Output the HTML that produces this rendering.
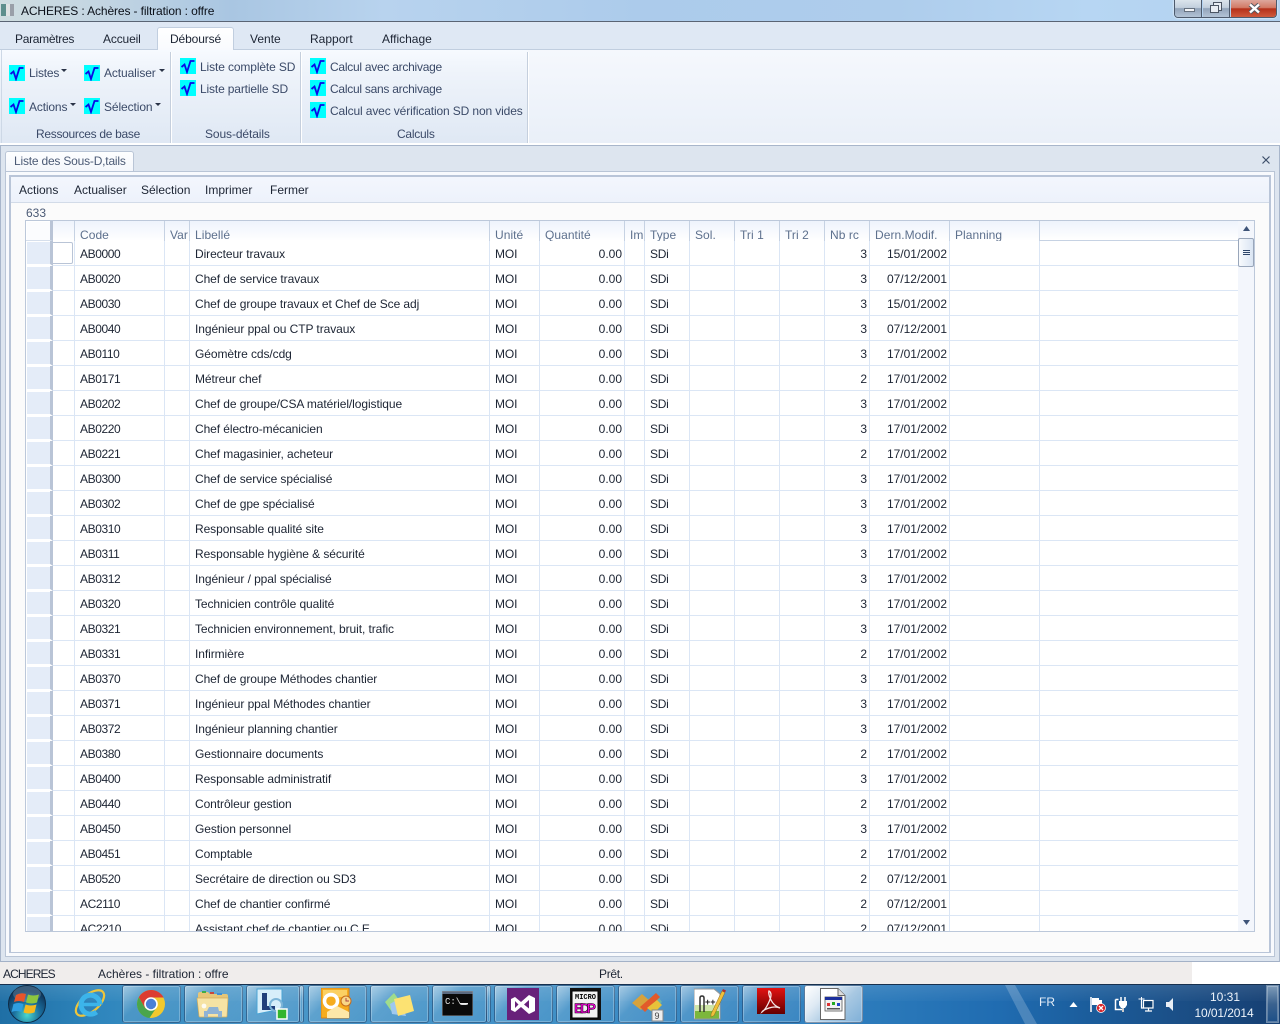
<!DOCTYPE html>
<html lang="fr"><head><meta charset="utf-8"><title>ACHERES</title>
<style>
*{box-sizing:border-box}
html,body{margin:0;padding:0;width:1280px;height:1024px;overflow:hidden;background:#fff}
body{font:12px "Liberation Sans",sans-serif;position:relative;color:#1c2433}
.a,.t{position:absolute;white-space:nowrap}
.t{line-height:14px;letter-spacing:0}
.rb{color:#3b4a68}
.ic{position:absolute;width:16px;height:16px;background:#00ffff}
.ic svg{display:block}
#grid{position:absolute;left:25px;top:220px;width:1230px;height:712px;border:1px solid #bcc8da;overflow:hidden;background:#fff}
#grid table{position:absolute;left:0;top:0;width:1213px;table-layout:fixed;border-collapse:separate;border-spacing:0}
#grid th,#grid td{padding:0 2px 0 5px;overflow:hidden;white-space:nowrap;font-weight:normal;text-align:left;border-right:1px solid #dbe6f5;letter-spacing:-.08px}
#grid th{height:20px;vertical-align:bottom;padding-bottom:0;line-height:12px;color:#5d708d;border-right-color:#c6d2e3;background:linear-gradient(#eef3fc,#fff);letter-spacing:.05px}
#grid td{height:25px;border-bottom:1px solid #dbe6f5;color:#1c2433;padding-top:2px;line-height:22px;vertical-align:top}
#grid td:nth-child(3){letter-spacing:-.4px}
#grid td:nth-child(6){letter-spacing:-.1px}
#grid td:nth-child(9){letter-spacing:-.3px}
#grid .h{padding:0;background:#e4ecf8;border-right:3px solid #b9c4d6;border-bottom:2px solid #fff;box-shadow:inset 1px 1px 0 #fff}
#grid th.h{background:#fbfcfe;border-bottom:1px solid #d6dfec}
#grid td.s{padding:0}
#grid .r{text-align:right;letter-spacing:0}
#grid td.e,#grid th.e{border-right:0}
.btn{position:absolute;top:985px;height:38px;border:1px solid rgba(20,50,90,.5);border-radius:3px;box-shadow:inset 0 0 0 1px rgba(255,255,255,.25);background:linear-gradient(135deg,rgba(255,255,255,.5) 0,rgba(255,255,255,.12) 35%,rgba(255,255,255,.05) 100%)}
</style></head><body>

<!-- title bar -->
<div class="a" style="left:0;top:0;width:1280px;height:22px;background:linear-gradient(90deg,#cfdde0 0,#c3d5e2 8%,#a9c6e2 18%,#b8d3ee 30%,#accbeb 50%,#aecdec 70%,#b7d6f3 85%,#b2d1ef 100%);border-bottom:1px solid #5a6474"></div>
<div class="a" style="left:1px;top:4px;width:13px;height:12px;background:linear-gradient(90deg,#5d8f8c 0 5px,#dfe3e3 5px 9px,#9aa0a8 9px)"></div>
<div class="t" style="left:21px;top:4px;color:#0a0f18;letter-spacing:-.12px">ACHERES : Achères - filtration : offre</div>
<div class="a" style="left:1174px;top:0;width:103px;height:18px;border:1px solid #4d5a6c;border-top:0;border-radius:0 0 4px 4px;overflow:hidden;box-shadow:0 0 2px #fff">
 <div class="a" style="left:0;top:0;width:27px;height:17px;background:linear-gradient(#dbe4ec 0,#c2cfdd 45%,#92a4ba 50%,#b3c3d6 100%);border-right:1px solid #4d5a6c"></div>
 <div class="a" style="left:9px;top:8px;width:11px;height:4px;background:#f2f4f7;border:1px solid #66717f"></div>
 <div class="a" style="left:28px;top:0;width:27px;height:17px;background:linear-gradient(#dbe4ec 0,#c2cfdd 45%,#92a4ba 50%,#b3c3d6 100%);border-right:1px solid #4d5a6c"></div>
 <div class="a" style="left:38px;top:2px;width:9px;height:9px;border:1px solid #4b5563;background:#e8edf3"></div>
 <div class="a" style="left:35px;top:5px;width:9px;height:8px;border:1px solid #4b5563;background:#e8edf3"></div>
 <div class="a" style="left:56px;top:0;width:47px;height:17px;background:linear-gradient(#dda79c 0,#d27a66 45%,#b5301a 52%,#cf5a3c 100%)"></div>
 <svg class="a" style="left:73px;top:3px" width="13" height="11"><path d="M2 1.5L11 9.5M11 1.5L2 9.5" stroke="#565b63" stroke-width="4.4"/><path d="M2 1.5L11 9.5M11 1.5L2 9.5" stroke="#fff" stroke-width="2.4"/></svg>
</div>

<!-- ribbon -->
<div class="a" style="left:0;top:22px;width:1280px;height:28px;background:#dfe8f4"></div>
<div class="a" style="left:0;top:49px;width:1280px;height:1px;background:#c1cedf"></div>
<div class="a" style="left:157px;top:27px;width:77px;height:24px;background:linear-gradient(#fff,#f8fafe);border:1px solid #c1cedf;border-bottom:0;border-radius:3px 3px 0 0"></div>
<div class="t" style="left:15px;top:32px;letter-spacing:-.3px">Paramètres</div>
<div class="t" style="left:103px;top:32px;letter-spacing:-.15px">Accueil</div>
<div class="t" style="left:170px;top:32px;letter-spacing:-.12px">Déboursé</div>
<div class="t" style="left:250px;top:32px">Vente</div>
<div class="t" style="left:310px;top:32px">Rapport</div>
<div class="t" style="left:382px;top:32px">Affichage</div>

<div class="a" style="left:0;top:50px;width:1280px;height:94px;background:linear-gradient(#f7faff 0,#eef3fa 25%,#dfe8f4 100%)"></div>
<div class="a" style="left:528px;top:50px;width:752px;height:94px;background:linear-gradient(#f5f8fd,#e9eff8)"></div>
<div class="a" style="left:1px;top:50px;width:1px;height:93px;background:#cdd8e6"></div>
<div class="a" style="left:170px;top:52px;width:2px;height:91px;background:#c5cfdd;border-right:1px solid #fff"></div>
<div class="a" style="left:300px;top:52px;width:2px;height:91px;background:#c5cfdd;border-right:1px solid #fff"></div>
<div class="a" style="left:527px;top:52px;width:2px;height:91px;background:#c5cfdd;border-right:1px solid #fff"></div>
<div class="a" style="left:0;top:143px;width:1280px;height:3px;background:#fff;border-bottom:1px solid #a8b6cb"></div>

<div class="ic" style="left:9px;top:65px"><svg width="16" height="16"><path d="M1.5 9L4.5 6.5L7 14L10.5 3H14.5" fill="none" stroke="#0a0ae6" stroke-width="1.8"/></svg></div>
<div class="t rb" style="left:29px;top:66px;letter-spacing:-.2px">Listes</div>
<svg class="a" style="left:61px;top:69px" width="7" height="4"><path d="M0 0H6L3 3Z" fill="#2a3347"/></svg>
<div class="ic" style="left:84px;top:65px"><svg width="16" height="16"><path d="M1.5 9L4.5 6.5L7 14L10.5 3H14.5" fill="none" stroke="#0a0ae6" stroke-width="1.8"/></svg></div>
<div class="t rb" style="left:104px;top:66px;letter-spacing:-.1px">Actualiser</div>
<svg class="a" style="left:159px;top:69px" width="7" height="4"><path d="M0 0H6L3 3Z" fill="#2a3347"/></svg>
<div class="ic" style="left:9px;top:98px"><svg width="16" height="16"><path d="M1.5 9L4.5 6.5L7 14L10.5 3H14.5" fill="none" stroke="#0a0ae6" stroke-width="1.8"/></svg></div>
<div class="t rb" style="left:29px;top:100px;letter-spacing:-.15px">Actions</div>
<svg class="a" style="left:70px;top:103px" width="7" height="4"><path d="M0 0H6L3 3Z" fill="#2a3347"/></svg>
<div class="ic" style="left:84px;top:98px"><svg width="16" height="16"><path d="M1.5 9L4.5 6.5L7 14L10.5 3H14.5" fill="none" stroke="#0a0ae6" stroke-width="1.8"/></svg></div>
<div class="t rb" style="left:104px;top:100px;letter-spacing:-.1px">Sélection</div>
<svg class="a" style="left:155px;top:103px" width="7" height="4"><path d="M0 0H6L3 3Z" fill="#2a3347"/></svg>
<div class="t rb" style="left:36px;top:127px;letter-spacing:-.3px">Ressources de base</div>

<div class="ic" style="left:180px;top:58px"><svg width="16" height="16"><path d="M1.5 9L4.5 6.5L7 14L10.5 3H14.5" fill="none" stroke="#0a0ae6" stroke-width="1.8"/></svg></div>
<div class="t rb" style="left:200px;top:60px;letter-spacing:-.12px">Liste complète SD</div>
<div class="ic" style="left:180px;top:80px"><svg width="16" height="16"><path d="M1.5 9L4.5 6.5L7 14L10.5 3H14.5" fill="none" stroke="#0a0ae6" stroke-width="1.8"/></svg></div>
<div class="t rb" style="left:200px;top:82px;letter-spacing:-.15px">Liste partielle SD</div>
<div class="t rb" style="left:205px;top:127px;letter-spacing:-.1px">Sous-détails</div>

<div class="ic" style="left:310px;top:58px"><svg width="16" height="16"><path d="M1.5 9L4.5 6.5L7 14L10.5 3H14.5" fill="none" stroke="#0a0ae6" stroke-width="1.8"/></svg></div>
<div class="t rb" style="left:330px;top:60px;letter-spacing:-.26px">Calcul avec archivage</div>
<div class="ic" style="left:310px;top:80px"><svg width="16" height="16"><path d="M1.5 9L4.5 6.5L7 14L10.5 3H14.5" fill="none" stroke="#0a0ae6" stroke-width="1.8"/></svg></div>
<div class="t rb" style="left:330px;top:82px;letter-spacing:-.26px">Calcul sans archivage</div>
<div class="ic" style="left:310px;top:102px"><svg width="16" height="16"><path d="M1.5 9L4.5 6.5L7 14L10.5 3H14.5" fill="none" stroke="#0a0ae6" stroke-width="1.8"/></svg></div>
<div class="t rb" style="left:330px;top:104px;letter-spacing:-.13px">Calcul avec vérification SD non vides</div>
<div class="t rb" style="left:397px;top:127px;letter-spacing:-.25px">Calculs</div>

<!-- doc area -->
<div class="a" style="left:0;top:146px;width:1280px;height:816px;background:#dde5ef;border:1px solid #a8b6cb;border-top:0;border-bottom:1px solid #a3b1c7"></div>
<div class="a" style="left:5px;top:151px;width:129px;height:21px;background:linear-gradient(#fdfeff,#f3f6fb);border:1px solid #b9c5d6;border-bottom:0;border-radius:3px 3px 0 0"></div>
<div class="t" style="left:14px;top:154px;color:#4b5a75;letter-spacing:-.2px">Liste des Sous-D,tails</div>
<svg class="a" style="left:1262px;top:156px" width="8" height="8"><path d="M.5.5L7.500 7.500M7.500.5L.5 7.500" stroke="#3d4f6b" stroke-width="1.2"/></svg>
<div class="a" style="left:5px;top:171px;width:1270px;height:786px;background:#f8fafd;border:1px solid #b9c5d6"></div>
<div class="a" style="left:9px;top:175px;width:1262px;height:778px;background:#fbfbfb;border:2px solid #b9c5d8;border-bottom:1px solid #b9c5d8"></div>
<div class="a" style="left:11px;top:177px;width:1258px;height:26px;background:linear-gradient(#f3f6fd,#edf2fb);border-bottom:1px solid #d2dbe8"></div>
<div class="t" style="left:19px;top:183px">Actions</div>
<div class="t" style="left:74px;top:183px">Actualiser</div>
<div class="t" style="left:141px;top:183px">Sélection</div>
<div class="t" style="left:205px;top:183px">Imprimer</div>
<div class="t" style="left:270px;top:183px">Fermer</div>
<div class="t" style="left:26px;top:206px;color:#4b5a75">633</div>

<!-- grid -->
<div id="grid">
<table>
<colgroup><col style="width:27px"><col style="width:22px"><col style="width:90px"><col style="width:25px"><col style="width:300px"><col style="width:50px"><col style="width:85px"><col style="width:20px"><col style="width:45px"><col style="width:45px"><col style="width:45px"><col style="width:45px"><col style="width:45px"><col style="width:80px"><col style="width:90px"><col style="width:199px"></colgroup>
<thead><tr><th class="h"></th><th></th><th>Code</th><th>Var</th><th>Libellé</th><th>Unité</th><th>Quantité</th><th>Im</th><th>Type</th><th>Sol.</th><th>Tri 1</th><th>Tri 2</th><th>Nb rc</th><th>Dern.Modif.</th><th>Planning</th><th class="e" style="border-bottom:1px solid #c6d2e3"></th></tr></thead>
<tbody>
<tr><td class="h"></td><td class="s"></td><td>AB0000</td><td></td><td>Directeur travaux</td><td>MOI</td><td class="r">0.00</td><td></td><td>SDi</td><td></td><td></td><td></td><td class="r">3</td><td class="r">15/01/2002</td><td></td><td class="e"></td></tr>
<tr><td class="h"></td><td class="s"></td><td>AB0020</td><td></td><td>Chef de service travaux</td><td>MOI</td><td class="r">0.00</td><td></td><td>SDi</td><td></td><td></td><td></td><td class="r">3</td><td class="r">07/12/2001</td><td></td><td class="e"></td></tr>
<tr><td class="h"></td><td class="s"></td><td>AB0030</td><td></td><td>Chef de groupe travaux et Chef de Sce adj</td><td>MOI</td><td class="r">0.00</td><td></td><td>SDi</td><td></td><td></td><td></td><td class="r">3</td><td class="r">15/01/2002</td><td></td><td class="e"></td></tr>
<tr><td class="h"></td><td class="s"></td><td>AB0040</td><td></td><td>Ingénieur ppal ou CTP travaux</td><td>MOI</td><td class="r">0.00</td><td></td><td>SDi</td><td></td><td></td><td></td><td class="r">3</td><td class="r">07/12/2001</td><td></td><td class="e"></td></tr>
<tr><td class="h"></td><td class="s"></td><td>AB0110</td><td></td><td>Géomètre cds/cdg</td><td>MOI</td><td class="r">0.00</td><td></td><td>SDi</td><td></td><td></td><td></td><td class="r">3</td><td class="r">17/01/2002</td><td></td><td class="e"></td></tr>
<tr><td class="h"></td><td class="s"></td><td>AB0171</td><td></td><td>Métreur chef</td><td>MOI</td><td class="r">0.00</td><td></td><td>SDi</td><td></td><td></td><td></td><td class="r">2</td><td class="r">17/01/2002</td><td></td><td class="e"></td></tr>
<tr><td class="h"></td><td class="s"></td><td>AB0202</td><td></td><td>Chef de groupe/CSA matériel/logistique</td><td>MOI</td><td class="r">0.00</td><td></td><td>SDi</td><td></td><td></td><td></td><td class="r">3</td><td class="r">17/01/2002</td><td></td><td class="e"></td></tr>
<tr><td class="h"></td><td class="s"></td><td>AB0220</td><td></td><td>Chef électro-mécanicien</td><td>MOI</td><td class="r">0.00</td><td></td><td>SDi</td><td></td><td></td><td></td><td class="r">3</td><td class="r">17/01/2002</td><td></td><td class="e"></td></tr>
<tr><td class="h"></td><td class="s"></td><td>AB0221</td><td></td><td>Chef magasinier, acheteur</td><td>MOI</td><td class="r">0.00</td><td></td><td>SDi</td><td></td><td></td><td></td><td class="r">2</td><td class="r">17/01/2002</td><td></td><td class="e"></td></tr>
<tr><td class="h"></td><td class="s"></td><td>AB0300</td><td></td><td>Chef de service spécialisé</td><td>MOI</td><td class="r">0.00</td><td></td><td>SDi</td><td></td><td></td><td></td><td class="r">3</td><td class="r">17/01/2002</td><td></td><td class="e"></td></tr>
<tr><td class="h"></td><td class="s"></td><td>AB0302</td><td></td><td>Chef de gpe spécialisé</td><td>MOI</td><td class="r">0.00</td><td></td><td>SDi</td><td></td><td></td><td></td><td class="r">3</td><td class="r">17/01/2002</td><td></td><td class="e"></td></tr>
<tr><td class="h"></td><td class="s"></td><td>AB0310</td><td></td><td>Responsable qualité site</td><td>MOI</td><td class="r">0.00</td><td></td><td>SDi</td><td></td><td></td><td></td><td class="r">3</td><td class="r">17/01/2002</td><td></td><td class="e"></td></tr>
<tr><td class="h"></td><td class="s"></td><td>AB0311</td><td></td><td>Responsable hygiène &amp; sécurité</td><td>MOI</td><td class="r">0.00</td><td></td><td>SDi</td><td></td><td></td><td></td><td class="r">3</td><td class="r">17/01/2002</td><td></td><td class="e"></td></tr>
<tr><td class="h"></td><td class="s"></td><td>AB0312</td><td></td><td>Ingénieur / ppal spécialisé</td><td>MOI</td><td class="r">0.00</td><td></td><td>SDi</td><td></td><td></td><td></td><td class="r">3</td><td class="r">17/01/2002</td><td></td><td class="e"></td></tr>
<tr><td class="h"></td><td class="s"></td><td>AB0320</td><td></td><td>Technicien contrôle qualité</td><td>MOI</td><td class="r">0.00</td><td></td><td>SDi</td><td></td><td></td><td></td><td class="r">3</td><td class="r">17/01/2002</td><td></td><td class="e"></td></tr>
<tr><td class="h"></td><td class="s"></td><td>AB0321</td><td></td><td>Technicien environnement, bruit, trafic</td><td>MOI</td><td class="r">0.00</td><td></td><td>SDi</td><td></td><td></td><td></td><td class="r">3</td><td class="r">17/01/2002</td><td></td><td class="e"></td></tr>
<tr><td class="h"></td><td class="s"></td><td>AB0331</td><td></td><td>Infirmière</td><td>MOI</td><td class="r">0.00</td><td></td><td>SDi</td><td></td><td></td><td></td><td class="r">2</td><td class="r">17/01/2002</td><td></td><td class="e"></td></tr>
<tr><td class="h"></td><td class="s"></td><td>AB0370</td><td></td><td>Chef de groupe Méthodes chantier</td><td>MOI</td><td class="r">0.00</td><td></td><td>SDi</td><td></td><td></td><td></td><td class="r">3</td><td class="r">17/01/2002</td><td></td><td class="e"></td></tr>
<tr><td class="h"></td><td class="s"></td><td>AB0371</td><td></td><td>Ingénieur ppal Méthodes chantier</td><td>MOI</td><td class="r">0.00</td><td></td><td>SDi</td><td></td><td></td><td></td><td class="r">3</td><td class="r">17/01/2002</td><td></td><td class="e"></td></tr>
<tr><td class="h"></td><td class="s"></td><td>AB0372</td><td></td><td>Ingénieur planning chantier</td><td>MOI</td><td class="r">0.00</td><td></td><td>SDi</td><td></td><td></td><td></td><td class="r">3</td><td class="r">17/01/2002</td><td></td><td class="e"></td></tr>
<tr><td class="h"></td><td class="s"></td><td>AB0380</td><td></td><td>Gestionnaire documents</td><td>MOI</td><td class="r">0.00</td><td></td><td>SDi</td><td></td><td></td><td></td><td class="r">2</td><td class="r">17/01/2002</td><td></td><td class="e"></td></tr>
<tr><td class="h"></td><td class="s"></td><td>AB0400</td><td></td><td>Responsable administratif</td><td>MOI</td><td class="r">0.00</td><td></td><td>SDi</td><td></td><td></td><td></td><td class="r">3</td><td class="r">17/01/2002</td><td></td><td class="e"></td></tr>
<tr><td class="h"></td><td class="s"></td><td>AB0440</td><td></td><td>Contrôleur gestion</td><td>MOI</td><td class="r">0.00</td><td></td><td>SDi</td><td></td><td></td><td></td><td class="r">2</td><td class="r">17/01/2002</td><td></td><td class="e"></td></tr>
<tr><td class="h"></td><td class="s"></td><td>AB0450</td><td></td><td>Gestion personnel</td><td>MOI</td><td class="r">0.00</td><td></td><td>SDi</td><td></td><td></td><td></td><td class="r">3</td><td class="r">17/01/2002</td><td></td><td class="e"></td></tr>
<tr><td class="h"></td><td class="s"></td><td>AB0451</td><td></td><td>Comptable</td><td>MOI</td><td class="r">0.00</td><td></td><td>SDi</td><td></td><td></td><td></td><td class="r">2</td><td class="r">17/01/2002</td><td></td><td class="e"></td></tr>
<tr><td class="h"></td><td class="s"></td><td>AB0520</td><td></td><td>Secrétaire de direction ou SD3</td><td>MOI</td><td class="r">0.00</td><td></td><td>SDi</td><td></td><td></td><td></td><td class="r">2</td><td class="r">07/12/2001</td><td></td><td class="e"></td></tr>
<tr><td class="h"></td><td class="s"></td><td>AC2110</td><td></td><td>Chef de chantier confirmé</td><td>MOI</td><td class="r">0.00</td><td></td><td>SDi</td><td></td><td></td><td></td><td class="r">2</td><td class="r">07/12/2001</td><td></td><td class="e"></td></tr>
<tr><td class="h"></td><td class="s"></td><td>AC2210</td><td></td><td>Assistant chef de chantier ou C.E</td><td>MOI</td><td class="r">0.00</td><td></td><td>SDi</td><td></td><td></td><td></td><td class="r">2</td><td class="r">07/12/2001</td><td></td><td class="e"></td></tr>
</tbody></table>
</div>
<!-- selected cell -->
<div class="a" style="left:53px;top:242px;width:20px;height:22px;background:#fff;border:1px solid #b9c4d6;border-left:0;border-radius:0 2px 2px 0"></div>
<!-- scrollbar -->
<div class="a" style="left:1238px;top:221px;width:16px;height:710px;background:#f3f6fc"></div>
<svg class="a" style="left:1242px;top:226px" width="9" height="6"><path d="M4.5 0L8 5H1Z" fill="#3e5478"/></svg>
<div class="a" style="left:1238px;top:238px;width:16px;height:29px;border:1px solid #99a6ba;border-radius:2px;background:linear-gradient(90deg,#f8fafd,#dae5f3)"></div>
<div class="a" style="left:1243px;top:250px;width:7px;height:5px;border-top:1px solid #2e4569;border-bottom:1px solid #2e4569"></div>
<div class="a" style="left:1243px;top:252px;width:7px;height:1px;background:#2e4569"></div>
<svg class="a" style="left:1242px;top:920px" width="9" height="6"><path d="M1 0H8L4.5 5Z" fill="#3e5478"/></svg>

<!-- status bar -->
<div class="a" style="left:0;top:962px;width:1192px;height:22px;background:#f0edec"></div>
<div class="a" style="left:1192px;top:962px;width:88px;height:22px;background:#fff"></div>
<div class="t" style="left:3px;top:967px;letter-spacing:-.9px">ACHERES</div>
<div class="t" style="left:98px;top:967px">Achères - filtration : offre</div>
<div class="t" style="left:599px;top:967px;letter-spacing:-.3px">Prêt.</div>

<!-- taskbar -->
<div class="a" style="left:0;top:984px;width:1280px;height:40px;background:linear-gradient(90deg,#1f6fa5 0,#2f86bd 8%,#4a97c9 20%,#3f8fc6 45%,#2f7fbe 65%,#206cb1 78%,#1b5d9c 85%,#1b4f87 92%,#163f72 100%);border-top:1px solid #17304e"></div>
<div class="a" style="left:0;top:985px;width:1280px;height:16px;background:linear-gradient(rgba(255,255,255,.1),rgba(255,255,255,.02))"></div>
<svg class="a" style="left:1000px;top:985px" width="40" height="39"><path d="M5 0H15L37 39H25Z" fill="#fff" fill-opacity=".2"/></svg>

<div class="btn" style="left:122px;width:59px"></div>
<div class="btn" style="left:184px;width:59px"></div>
<div class="btn" style="left:299px;width:5px"></div>
<div class="btn" style="left:246px;width:54px"></div>
<div class="btn" style="left:308px;width:59px"></div>
<div class="btn" style="left:370px;width:59px"></div>
<div class="btn" style="left:486px;width:5px"></div>
<div class="btn" style="left:432px;width:55px"></div>
<div class="btn" style="left:494px;width:59px"></div>
<div class="btn" style="left:556px;width:59px"></div>
<div class="btn" style="left:618px;width:59px"></div>
<div class="btn" style="left:680px;width:59px"></div>
<div class="btn" style="left:742px;width:59px"></div>
<div class="btn" style="left:804px;width:59px;background:linear-gradient(135deg,#fff 0,#dfeaf4 30%,#a8c8e2 60%,#7fb0d8 100%)"></div>

<!-- start orb -->
<svg class="a" style="left:7px;top:984px" width="40" height="40" viewBox="0 0 40 40">
<defs><radialGradient id="o" cx="50%" cy="80%" r="65%"><stop offset="0" stop-color="#4ad8d0"/><stop offset=".55" stop-color="#1a6d9c"/><stop offset="1" stop-color="#0f3a60"/></radialGradient></defs>
<circle cx="20" cy="20" r="18.5" fill="url(#o)" stroke="#0e2a44" stroke-width="1"/>
<ellipse cx="20" cy="10" rx="14" ry="8" fill="#fff" fill-opacity=".18"/>
<path d="M9 11q5-3 10-1l-2 8q-5-2-10 0z" fill="#e8552a"/>
<path d="M21 10.500q5 2 11 0l-2 8q-5 2-11 0z" fill="#8dc63f"/>
<path d="M6.500 20q5-2 10 0l-2 8q-5-2-10 0z" fill="#2f9fe0"/>
<path d="M18.500 20.500q5 2 11 0l-2 8q-6 2-11 0z" fill="#f6b81e"/>
</svg>
<!-- IE -->
<svg class="a" style="left:73px;top:987px" width="34" height="34" viewBox="0 0 34 34">
<ellipse cx="17" cy="16" rx="8.500" ry="17" transform="rotate(50 17 16)" fill="none" stroke="#efc53a" stroke-width="2.200"/>
<path d="M9 17.500H27" stroke="#3cb4ea" stroke-width="3.500"/>
<path d="M27 17.500A9.500 9.500 0 1 0 23.500 25" fill="none" stroke="#3cb4ea" stroke-width="5"/>
</svg>
<!-- chrome -->
<svg class="a" style="left:136px;top:989px" width="30" height="30" viewBox="0 0 30 30">
<circle cx="15" cy="15" r="14" fill="#f1c92e"/>
<path d="M15 1A14 14 0 0 0 2.800 8.200L9 19 15 8.500H27.600A14 14 0 0 0 15 1Z" fill="#dc3d32"/>
<path d="M2.800 8.200A14 14 0 0 0 13.500 29L19.500 20 9 19Z" fill="#4aa54d"/>
<circle cx="15" cy="15" r="6.800" fill="#fff"/><circle cx="15" cy="15" r="5.200" fill="#4a7fd6"/>
</svg>
<!-- folder -->
<svg class="a" style="left:196px;top:989px" width="34" height="30" viewBox="0 0 34 30">
<path d="M2 5q0-2 2-2h8l2 2h16q2 0 2 2v3H2z" fill="#e6c678"/>
<rect x="6" y="2" width="4" height="2" fill="#3fae49"/><rect x="14" y="3" width="4" height="2" fill="#c8473d"/><rect x="21" y="4" width="5" height="2" fill="#3e8fd8"/>
<path d="M1 9h31l-1 18q0 1-1 1H4q-1 0-1-1z" fill="#f6e3a4" stroke="#d0ad5e" stroke-width=".7"/>
<path d="M8 28v-6h3l2-4h9l1 4h3v6h-4v-3H12v3z" fill="#8fb3d5"/><circle cx="8" cy="17" r="2.400" fill="#fff" opacity=".85"/>
</svg>
<!-- lync -->
<svg class="a" style="left:255px;top:988px" width="36" height="34" viewBox="0 0 36 34">
<path d="M2 1h25l0 22-10 0-15 3z" fill="#d7eefa" stroke="#4ba4d4" stroke-width="1"/>
<path d="M7 5h5v13h8v4H7z" fill="#213f7b"/>
<circle cx="21" cy="17" r="6" fill="none" stroke="#7db5d8" stroke-width="2"/>
<rect x="22" y="21" width="10" height="10" fill="#33b52f" stroke="#fff" stroke-width="1.500"/>
</svg>
<!-- outlook -->
<svg class="a" style="left:321px;top:988px" width="32" height="32" viewBox="0 0 32 32">
<rect x="0" y="0" width="28" height="30" rx="1" fill="#f6ac1e" stroke="#d6821a"/>
<rect x="2" y="2" width="24" height="7" fill="#fbd063"/>
<circle cx="10" cy="13" r="6.500" fill="none" stroke="#fff" stroke-width="3.500"/>
<path d="M6 24l10-6 12 6v6H6z" fill="#fde7a8"/>
<circle cx="25" cy="13" r="5" fill="#f8d788" stroke="#c66b1b"/>
<path d="M25 10v3h3" stroke="#a44" fill="none"/>
</svg>
<!-- sticky -->
<svg class="a" style="left:382px;top:990px" width="34" height="30" viewBox="0 0 34 30">
<path d="M3 12L12 3 20 14 10 22Z" fill="#9fdc8c"/><path d="M8 14L18 8 24 26 10 24Z" fill="#9ec8ee"/>
<path d="M12 9L28 5 32 21 16 26Z" fill="#fce272"/>
</svg>
<!-- cmd -->
<svg class="a" style="left:442px;top:991px" width="31" height="25" viewBox="0 0 31 25">
<rect width="31" height="25" fill="#0a0a0a" stroke="#8a9098"/><rect x=".5" y=".5" width="30" height="2.500" fill="#5b6a80"/>
<text x="3" y="13" fill="#e6e6e6" font-family="Liberation Mono,monospace" font-size="9">C:\_</text>
<rect x="18" y="12" width="8" height="1.500" fill="#eee"/>
</svg>
<!-- VS -->
<svg class="a" style="left:507px;top:988px" width="32" height="32" viewBox="0 0 32 32">
<rect width="32" height="32" fill="#68217a"/>
<path d="M4 11l4-2 6 5 8-7 6 3v13l-6 3-8-7-6 5-4-2zM8 13v7l3.500-3.500zM22 12l-5 4.500 5 4z" fill="#fff" fill-rule="evenodd"/>
</svg>
<!-- EDP -->
<svg class="a" style="left:569px;top:988px" width="33" height="33" viewBox="0 0 33 33">
<rect x="1" y="0" width="31" height="32" fill="#111"/><rect x="3" y="3" width="26" height="27" fill="#f2f2f2" stroke="#000"/>
<text x="6" y="11" fill="#000" font-family="Liberation Mono,monospace" font-size="7" font-weight="bold">MICRO</text>
<text x="5" y="25" fill="#f000d8" stroke="#000" stroke-width=".5" font-family="Liberation Sans,sans-serif" font-size="14" font-weight="bold" textLength="22">EDP</text>
</svg>
<!-- VS setup -->
<svg class="a" style="left:630px;top:990px" width="36" height="32" viewBox="0 0 36 32">
<path d="M2 13l10-9 8 7-9 9z" fill="#d7a23c"/><path d="M18 9l8-5 6 8-7 6z" fill="#6cb3a8"/>
<path d="M10 17L26 3l4 4-15 15z" fill="#e25a2a"/><path d="M17 18l7 5 8-8-5-5z" fill="#e7c23a"/>
<rect x="22" y="20" width="11" height="11" fill="#eee" stroke="#888"/>
<text x="24.500" y="29" fill="#444" font-family="Liberation Sans,sans-serif" font-size="9">9</text>
</svg>
<!-- notepad++ -->
<svg class="a" style="left:694px;top:988px" width="32" height="32" viewBox="0 0 32 32">
<path d="M0 1h20l6 5v25H0z" fill="#fff" stroke="#999"/><rect x="1" y="22" width="24" height="8.500" fill="#7cb73c"/><rect x="1" y="17" width="24" height="6" fill="#cfe6a8"/>
<path d="M6 24V10q0-2 2-2t2 2v14" fill="none" stroke="#333" stroke-width="1.500"/>
<text x="11" y="17" fill="#222" font-family="Liberation Sans,sans-serif" font-size="9" font-weight="bold">++</text>
<path d="M17 26L28 3l3 1.500L20 27.500l-3 1.500z" fill="#f0c03a" stroke="#8a6a20" stroke-width=".5"/><path d="M28 3l1-2 3 1.500-1 2z" fill="#b03030"/>
</svg>
<!-- acrobat -->
<svg class="a" style="left:757px;top:988px" width="28" height="26" viewBox="0 0 28 26">
<defs><linearGradient id="ar" x1="0" y1="0" x2="0" y2="1"><stop offset="0" stop-color="#e21212"/><stop offset="1" stop-color="#640000"/></linearGradient></defs>
<rect width="28" height="26" fill="url(#ar)"/>
<path d="M12 3q-1 3 2 9t9 8q-5-2-11 0t-7 4q3-2 6-8t3-9q0-3-2-4z" fill="none" stroke="#f4e6e6" stroke-width="1.300"/>
</svg>
<!-- doc -->
<svg class="a" style="left:820px;top:988px" width="26" height="32" viewBox="0 0 26 32">
<path d="M.5.500H18l7 7v24H.5z" fill="#fff" stroke="#666"/><path d="M18 .5v7h7" fill="#ddd" stroke="#666"/>
<rect x="5" y="9" width="17" height="14" fill="#f2f2f2" stroke="#555" stroke-width=".8"/><rect x="5" y="9" width="17" height="3" fill="#1c2f9c"/>
<rect x="7" y="15" width="3" height="3" fill="#d33"/><rect x="12" y="14" width="3" height="3" fill="#2a2"/><rect x="17" y="15" width="3" height="3" fill="#24c"/>
<rect x="7" y="20" width="13" height="1.500" fill="#555"/>
</svg>

<!-- tray -->
<div class="t" style="left:1039px;top:995px;color:#e6eef8">FR</div>
<svg class="a" style="left:1069px;top:1002px" width="9" height="6"><path d="M4.500 0L8.500 5H.5Z" fill="#fff"/></svg>
<svg class="a" style="left:1090px;top:996px" width="16" height="17" viewBox="0 0 16 17"><path d="M1 1v15" stroke="#fff" stroke-width="1.500"/><path d="M2 2h7v2h3v5H2z" fill="#fff"/><circle cx="11" cy="12" r="4.500" fill="#d6242a" stroke="#fff" stroke-width=".7"/><path d="M9 10l4 4M13 10l-4 4" stroke="#fff" stroke-width="1.300"/></svg>
<svg class="a" style="left:1114px;top:996px" width="15" height="17" viewBox="0 0 15 17"><path d="M1.500 3.500h3M1.500 3.500v10h8" fill="none" stroke="#fff" stroke-width="1.500"/><path d="M7 1v4M11 1v4" stroke="#fff" stroke-width="1.500"/><path d="M5 5h8v4l-2 3H7L5 9z" fill="#fff"/><path d="M9 12v4" stroke="#ccc" stroke-width="2"/></svg>
<svg class="a" style="left:1138px;top:997px" width="16" height="16" viewBox="0 0 16 16"><path d="M3.500 0v4M.5 2h6" stroke="#fff"/><path d="M3.500 4v7h2" fill="none" stroke="#fff" stroke-width="1.200"/><rect x="5.500" y="3.500" width="9.500" height="7.500" fill="#103f70" stroke="#fff" stroke-width="1.200"/><path d="M7 14h7M10.500 11v3" stroke="#fff" stroke-width="1.200"/></svg>
<svg class="a" style="left:1165px;top:997px" width="10" height="15" viewBox="0 0 10 15"><path d="M1 5h3l4-4v13l-4-4H1z" fill="#e8eef5"/></svg>
<div class="a" style="left:1195px;top:990px;width:60px;text-align:center;color:#eef4fb;line-height:14px">10:31</div>
<div class="a" style="left:1190px;top:1006px;width:68px;text-align:center;color:#eef4fb;line-height:14px;letter-spacing:-.1px">10/01/2014</div>
<div class="a" style="left:1266px;top:985px;width:13px;height:38px;border:1px solid #6e8bab;background:linear-gradient(#7f9cb9,#3a628f 50%,#1d4f88);box-shadow:inset 0 0 0 1px rgba(255,255,255,.25)"></div>

</body></html>
